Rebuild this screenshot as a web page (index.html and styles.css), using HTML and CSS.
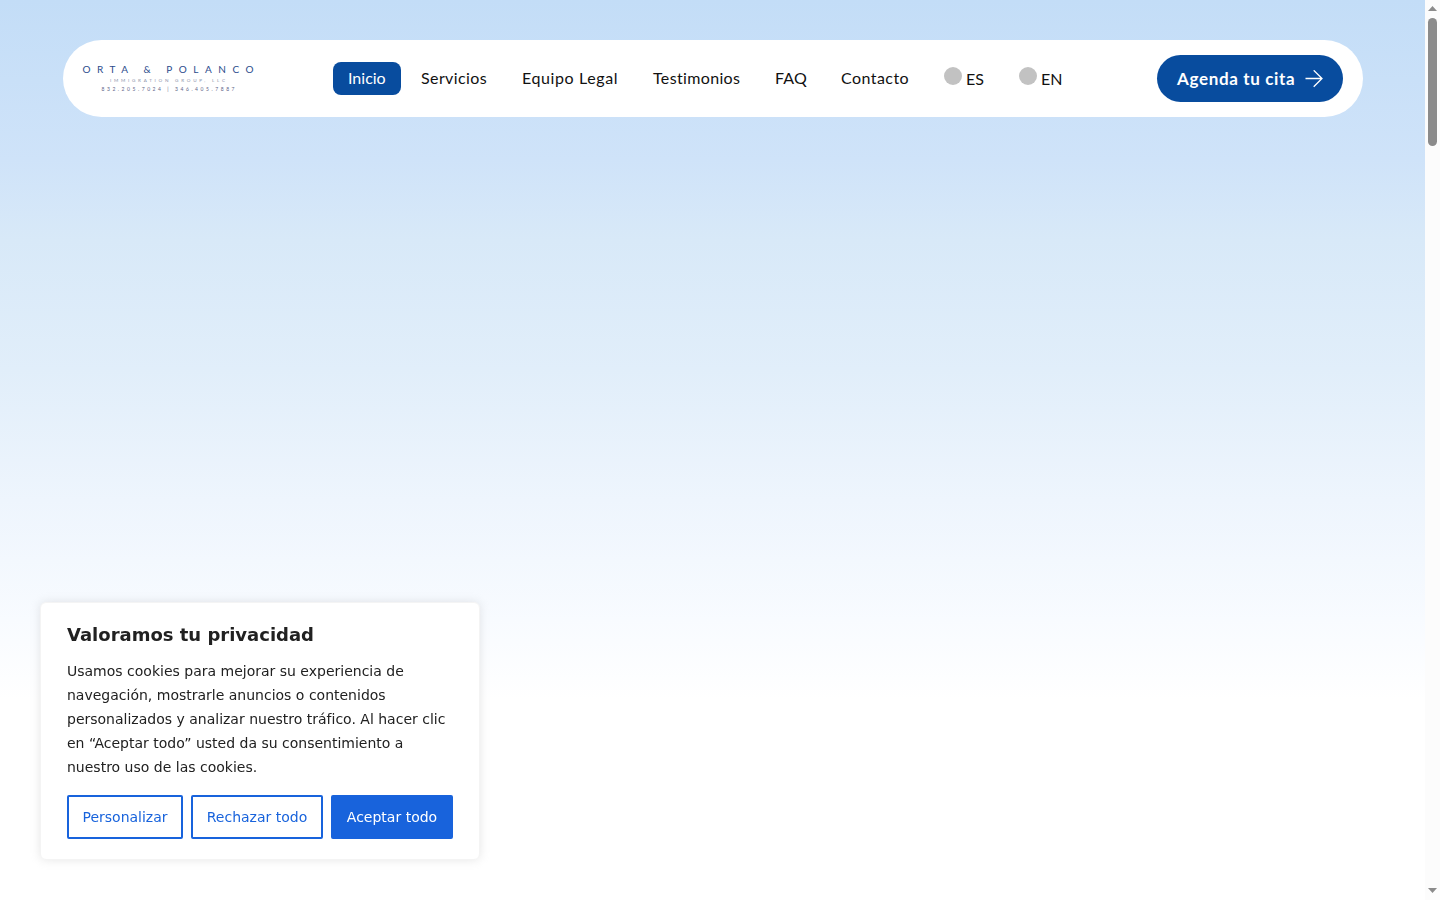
FILE: index.html
```
<!DOCTYPE html>
<html lang="es">
<head>
    <meta charset="UTF-8">
    <meta name="viewport" content="width=device-width, initial-scale=1.0">
    <title>Orta &amp; Polanco</title>
    <link rel="stylesheet" href="styles.css">
</head>
<body>

<main class="page">
    <header class="navbar">
        <a class="logo">
            <svg width="176" height="36" viewBox="0 0 176 36">
                <text class="logo-name" x="0.5" y="12" textLength="171">ORTA &amp; POLANCO</text>
                <text class="logo-sub" x="28" y="21" textLength="115">IMMIGRATION GROUP, LLC</text>
                <text class="logo-phone" x="19.5" y="29.6" textLength="133">832.205.7024 | 346.405.7887</text>
            </svg>
        </a>
        <nav class="menu">
            <a class="item inicio active">Inicio</a>
            <a class="item servicios">Servicios</a>
            <a class="item equipo">Equipo Legal</a>
            <a class="item testimonios">Testimonios</a>
            <a class="item faq">FAQ</a>
            <a class="item contacto">Contacto</a>
            <a class="item lang es"><span class="flag"></span>ES</a>
            <a class="item lang en"><span class="flag"></span>EN</a>
        </nav>
        <a class="cta">
            <span class="cta-text">Agenda tu cita</span>
            <svg width="18" height="18" viewBox="0 0 18 18" fill="none" stroke="#fff" stroke-width="1.3">
                <path d="M0.5 8.5H17M8.7 0.3L17 8.5L8.7 16.7"/>
            </svg>
        </a>
    </header>
</main>

<div class="scrollbar">
    <svg width="9" height="5" viewBox="0 0 9 5"><path d="M4.5 0L9 5H0Z" fill="#8b8b8b"/></svg>
    <div class="thumb"></div>
    <svg width="9" height="5" viewBox="0 0 9 5"><path d="M0 0H9L4.5 5Z" fill="#8b8b8b"/></svg>
</div>

<section class="cookies">
    <h2>Valoramos tu privacidad</h2>
    <p>Usamos cookies para mejorar su experiencia de navegación, mostrarle anuncios o contenidos personalizados y analizar nuestro tráfico. Al hacer clic en “Aceptar todo” usted da su consentimiento a nuestro uso de las cookies.</p>
    <div class="buttons">
        <button class="customize">Personalizar</button>
        <button class="reject">Rechazar todo</button>
        <button class="accept">Aceptar todo</button>
    </div>
</section>

</body>
</html>
```
FILE: styles.css
```
* {
    box-sizing: border-box;
}
body {
    margin: 0;
    display: flex;
    height: 100vh;
    overflow: hidden;
    font-family: Lato, sans-serif;
    background-color: #fff;
}
.page {
    flex: 1;
    padding: 40px 62px 0 63px;
    background: linear-gradient(180deg, #c3ddf7 0, #cfe3f9 160px, #d8e9f8 240px, #e1eefa 370px, #eef5fd 500px, #f8fbff 620px, #fff 700px);
}
.navbar {
    display: flex;
    align-items: center;
    height: 77px;
    padding: 0 20px 0 19px;
    border-radius: 39px;
    background-color: #fff;
}
.logo {
    width: 176px;
    height: 36px;
}
.logo svg {
    display: block;
}
.logo-name {
    font-size: 10px;
    fill: #2c4c8c;
}
.logo-sub {
    font-size: 4.6px;
    fill: #8a91aa;
}
.logo-phone {
    font-size: 5px;
    fill: #5d6588;
}
.menu {
    display: flex;
    gap: 5px;
    margin-left: 75px;
}
.item {
    height: 33px;
    padding-left: 15px;
    border-radius: 8px;
    font-size: 16px;
    line-height: 31px;
    white-space: nowrap;
    color: #111;
}
.active {
    background-color: #084c9e;
    color: #fff;
}
.inicio {
    width: 68px;
}
.servicios {
    width: 96px;
    letter-spacing: 0.4px;
}
.equipo {
    width: 126px;
    letter-spacing: 0.6px;
}
.testimonios {
    width: 117px;
    letter-spacing: 0.35px;
}
.faq {
    width: 61px;
    letter-spacing: 0.2px;
}
.contacto {
    width: 98px;
    letter-spacing: 0.45px;
}
.lang {
    display: flex;
    gap: 4px;
    line-height: 33px;
}
.es {
    width: 70px;
}
.en {
    width: 74px;
}
.flag {
    width: 18px;
    height: 18px;
    margin-top: 5px;
    border-radius: 50%;
    background-color: #c2c2c2;
}
.cta {
    display: flex;
    align-items: center;
    justify-content: space-between;
    width: 186px;
    height: 47px;
    margin-left: auto;
    padding: 0 20px;
    border-radius: 24px;
    background-color: #084c9e;
    color: #fff;
    font-size: 17px;
    font-weight: bold;
    letter-spacing: 0.65px;
    white-space: nowrap;
}
.scrollbar {
    display: flex;
    flex-direction: column;
    align-items: center;
    width: 15px;
    padding: 6px 0 7px;
    background-color: #fcfcfc;
}
.thumb {
    width: 9px;
    height: 128px;
    margin: 7px 0 auto;
    border-radius: 5px;
    background-color: #8b8b8b;
}
.cookies {
    position: fixed;
    left: 40px;
    bottom: 40px;
    width: 440px;
    height: 258px;
    padding: 21px 26px 20px;
    border: 1px solid #f4f4f4;
    border-radius: 6px;
    background-color: #fff;
    box-shadow: 0 0 10px rgba(172, 171, 171, 0.3);
    color: #212121;
    font-family: "DejaVu Sans", sans-serif;
}
.cookies h2 {
    margin: 0 0 14px;
    font-size: 18px;
    line-height: 21px;
}
.cookies p {
    margin: 0 0 16px;
    font-size: 14px;
    line-height: 24px;
}
.buttons {
    display: flex;
    gap: 8px;
}
.buttons button {
    height: 44px;
    padding: 0;
    border: 2px solid #1863dc;
    border-radius: 2px;
    background-color: #fff;
    color: #1863dc;
    font-family: inherit;
    font-size: 14px;
}
.buttons .customize {
    width: 116px;
}
.buttons .reject {
    width: 132px;
}
.buttons .accept {
    width: 122px;
    background-color: #1863dc;
    color: #fff;
}
```
